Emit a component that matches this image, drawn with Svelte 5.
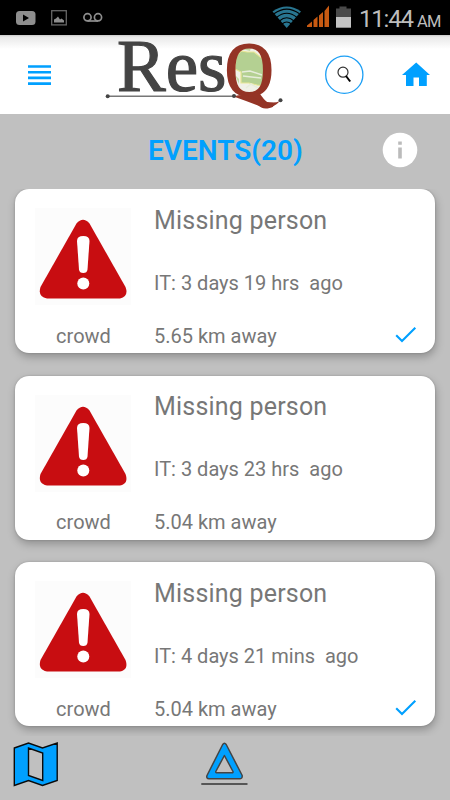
<script>
  const events = [
    { title: 'Missing person', time: 'IT: 3 days 19 hrs\u00a0 ago', distance: '5.65 km away', source: 'crowd', checked: true },
    { title: 'Missing person', time: 'IT: 3 days 23 hrs\u00a0 ago', distance: '5.04 km away', source: 'crowd', checked: false },
    { title: 'Missing person', time: 'IT: 4 days 21 mins\u00a0 ago', distance: '5.04 km away', source: 'crowd', checked: true }
  ];
</script>

<div class="screen">
  <div class="status">
    <svg class="notices" width="110" height="35" viewBox="0 0 110 35">
      <rect x="16" y="11" width="19.500" height="14" rx="3.500" fill="#8e8e8e" />
      <path d="M23 14.500v7l6-3.500z" fill="#000" />
      <rect x="51.700" y="10.700" width="14.600" height="14.200" fill="none" stroke="#666" stroke-width="1.300" />
      <path d="M54 22.500v-3l2-1 2-2 2 3 1.500-1 2.500 2v2z" fill="#8e8e8e" />
      <g fill="none" stroke="#8e8e8e" stroke-width="1.700">
        <circle cx="87.500" cy="17.300" r="3.600" />
        <circle cx="98" cy="17.300" r="3.600" />
        <path d="M87.500 21h10.500" />
      </g>
    </svg>
    <div class="system">
      <svg width="82" height="35" viewBox="272 0 82 35">
        <path d="M272.500 11.500Q286.700 1.500 301 11.500L286.700 28z" fill="#287590" />
        <g fill="none" stroke="#000" stroke-width="1.100">
          <path d="M274 13.800Q286.700 4.500 299.500 13.800" />
          <path d="M276.500 17.500Q286.700 9 297 17.500" />
          <path d="M279.500 21Q286.700 14.500 294 21" />
          <path d="M282 24Q286.700 20 291.500 24" />
        </g>
        <path d="M307 27v-1.500l5-4V27zM313.500 27v-7l4-3.500V27zM319 27V15.500l4-3.500V27zM324.500 27V11l4.500-5.500V27z" fill="#c85a12" />
        <path d="M339.500 6.500h7v2h4.500V17h-15V8.500h3.500z" fill="#4a4a4a" />
        <path d="M336 17h15v10.700h-15z" fill="#c3c3c3" />
      </svg>
      <span class="clock">11:44</span><span class="ampm">AM</span>
    </div>
  </div>

  <header>
    <svg class="menu" width="23" height="21" viewBox="0 0 23 21">
      <path d="M0 1.500h23M0 7.200h23M0 12.900h23M0 18.600h23" stroke="#00a0ff" stroke-width="2.600" />
    </svg>
    <svg class="logo" width="190" height="78" viewBox="100 36 190 78">
      <path d="M107.500 96.200H234" stroke="#777" stroke-width="1.500" />
      <circle cx="107.700" cy="96.200" r="2" fill="#444" />
      <text x="117" y="91.300" font-size="73" fill="#444" stroke="#444" stroke-width="1.200" textLength="109.500" lengthAdjust="spacingAndGlyphs">Res</text>
      <ellipse cx="250.500" cy="68.500" rx="17" ry="25" fill="#f1f1e8" />
      <path d="M236 56l5-5 6 1 7 0 9 7 4 4v18l-3 5-7-1-8-2-8 0v-11l-6-3z" fill="#b4d092" stroke="#e9e795" stroke-width="1.200" />
      <path d="M242 49l4-4 5 2-1 4zM235 75l4 4v5" fill="#c2d8a5" />
      <path d="M242 72l8-1 12 4M243 76l18 2M246 88l5-4 7 4" fill="none" stroke="#e7eddb" stroke-width="1.500" />
      <g transform="translate(225 94.700) scale(.87 1)"><text x="0" y="0" font-size="77" fill="#943426" stroke="#943426" stroke-width="2">Q</text></g>
      <path d="M235 96Q245 93 257 99Q272 105 280 101Q273 109 263 107.500Q249 102 235 97z" fill="#943426" />
      <circle cx="234" cy="96" r="2" fill="#444" />
      <circle cx="280.500" cy="100.300" r="2" fill="#444" />
    </svg>
    <svg class="search" width="40" height="40" viewBox="324 55 40 40">
      <circle cx="344.300" cy="74.700" r="18.600" fill="none" stroke="#1c9ff5" stroke-width="1.300" />
      <circle cx="343" cy="72.200" r="5" fill="none" stroke="#333" stroke-width="1.200" />
      <path d="M346 76l4.200 5.500" stroke="#000" stroke-width="2" />
    </svg>
    <svg class="home" width="28" height="24" viewBox="402 62 28 24">
      <path d="M416.200 62.500L430 75h-3.200v11h-7.800V77.500h-5.500V86h-7.500V75h-4z" fill="#00a0ff" />
    </svg>
  </header>

  <div class="heading">
    <h1>EVENTS(20)</h1>
    <svg width="36" height="36" viewBox="0 0 36 36">
      <circle cx="18" cy="18" r="17.300" fill="#fff" />
      <path d="M16.200 9.500h3.600v3.300h-3.600zM16.200 15.500h3.600v11h-3.600z" fill="#bbb" />
    </svg>
  </div>

  <main>
    {#each events as event}
      <article>
        <div class="picture">
          <svg width="96" height="97" viewBox="0 0 96 97">
            <rect width="96" height="97" fill="#fcfcfc" />
            <path d="M41.500 15.500Q48 8 54.500 15.500L90.500 79Q94 88.500 85 90.500H12Q2.500 88.500 5.500 79z" fill="#c80d11" />
            <path d="M42 33Q42 28 48.300 28Q54.500 28 54.500 33L52.500 61.500Q52 65 48.300 65Q44.500 65 44 61.500z" fill="#fff" />
            <circle cx="48.300" cy="75.500" r="6" fill="#fff" />
          </svg>
          <span>{event.source}</span>
        </div>
        <div class="details">
          <h2>{event.title}</h2>
          <p class="time">{event.time}</p>
          <p class="distance">{event.distance}</p>
        </div>
        {#if event.checked}
          <svg class="check" width="22" height="18" viewBox="0 0 22 18">
            <path d="M1.200 9.200L7 15L20.300 1.700" fill="none" stroke="#00a0ff" stroke-width="2.100" />
          </svg>
        {/if}
      </article>
    {/each}
  </main>

  <footer>
    <svg class="map" width="46" height="46" viewBox="13 741 46 46">
      <path d="M14.300 748L28.500 743L42.500 748L57.200 743V780.500L42.500 785.500L28.500 780.500L14.300 785.500zM28.500 748V775.500L42.700 780.500V753z" fill="#00a0ff" fill-rule="evenodd" stroke="#0b0b0b" stroke-width="1.400" />
    </svg>
    <svg class="alert" width="48" height="46" viewBox="200 741 48 46">
      <path d="M222.700 744.500Q224.400 742 226.200 744.500L242.200 775.500Q242.500 778.500 240 778.700H209Q206 778.500 207 775.500zM224.400 755.500L215.800 771.500Q215.500 772.800 217 772.800H232Q233.300 772.800 233 771.500z" fill="#00a0ff" fill-rule="evenodd" stroke="#444" stroke-width="1.500" stroke-linejoin="round" />
      <path d="M201.300 784H247.500" stroke="#333" stroke-width="1.400" />
    </svg>
  </footer>
</div>

<style>
  :global(body) { margin: 0; }
  .screen { width: 450px; height: 800px; display: flex; flex-direction: column; overflow: hidden; background: #c0c0c0; font-family: Roboto, sans-serif; color: #777; }
  svg { display: block; flex: none; }
  .status { height: 35px; flex: none; display: flex; justify-content: space-between; background: #000; }
  .system { display: flex; color: #bdbdbd; line-height: 35px; padding-right: 9px; white-space: nowrap; }
  .clock { width: 58px; font-size: 24px; letter-spacing: -1.200px; margin-left: 5px; margin-top: 2px; }
  .ampm { width: 24px; font-size: 16.500px; letter-spacing: -0.7px; padding-top: 4px; }
  header { box-sizing: border-box; height: 79px; flex: none; display: flex; padding: 1px 20px 0 28px; background: linear-gradient(#c9c9c9, #e9e9e9 2px, #fff 14px); }
  .menu { margin-top: 29px; }
  .logo { margin-left: 49px; overflow: visible; font-family: "Liberation Serif", serif; }
  .search { margin: 19px 38px 0 34px; }
  .home { margin-top: 26px; }
  .heading { height: 75px; flex: none; display: flex; justify-content: space-between; box-sizing: border-box; padding: 18px 32px 0 148px; }
  h1 { margin: 0; color: #00a0ff; font-size: 28px; font-weight: 600; line-height: 37px; }
  main { height: 547px; flex: none; display: flex; flex-direction: column; gap: 22.500px; padding: 0 15px; overflow: hidden; }
  article { height: 164px; flex: none; display: flex; border-radius: 14px; background: #fff; box-shadow: 1px 4px 8px rgba(0,0,0,.25), 0 0 2px rgba(0,0,0,.22); }
  .picture { width: 96px; display: flex; flex-direction: column; align-items: center; padding: 19px 0 0 20px; font-size: 20px; line-height: 24px; }
  .picture span { margin: 18.500px 0 0 1px; }
  .details { flex: 1; padding-left: 23px; }
  h2, p { margin: 0; font-weight: 400; white-space: nowrap; }
  h2 { font-size: 25px; line-height: 30px; letter-spacing: .2px; margin-top: 16.500px; }
  p { font-size: 20px; line-height: 24px; }
  .time { margin-top: 35px; }
  .distance { margin-top: 29px; }
  .check { margin: 137px 18px 0 0; }
  footer { flex: 1; display: flex; padding: 5px 13px; }
  .alert { margin-left: 141px; }
</style>
